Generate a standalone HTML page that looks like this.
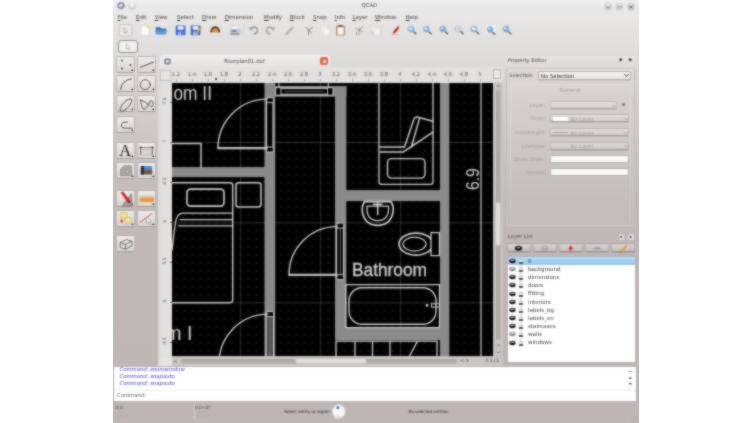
<!DOCTYPE html>
<html><head><meta charset="utf-8"><title>QCAD</title>
<style>
html,body{margin:0;padding:0;background:#fff}
body{width:752px;height:423px;overflow:hidden;position:relative;font-family:"DejaVu Sans","Liberation Sans",sans-serif;font-size:5.3px;line-height:6px;color:#2a2a2a}
#win{position:absolute;left:113px;top:0;width:526px;height:423px;overflow:hidden;
 background:linear-gradient(#ededed 0,#e5e4e3 24px,#dedcda 60px,#d3cfcc 100px,#cac5c2 150px,#c2bbb8 200px,#beb7b4 270px,#bdb6b3 423px)}
#win *{position:absolute;box-sizing:border-box}
#win svg *,#win .t *{position:static}
.t{white-space:nowrap}
.menu span{top:13.6px;font-size:5.4px;color:#3a3a3a}
.tb{width:18.8px;height:17.2px;border-radius:2.2px;border:0.6px solid #b9b4b1;border-bottom-color:#a39e9b;background:linear-gradient(#eeecea,#d9d5d2)}
.tb:after{content:"";position:absolute;right:1px;bottom:1px;border:1.3px solid transparent;border-right-color:#222;border-bottom-color:#222}
.tb.na:after{display:none}
.combo{height:8px;border-radius:2px;border:0.5px solid rgba(0,0,0,0.13);border-bottom-color:rgba(0,0,0,0.28);background:linear-gradient(rgba(255,255,255,0.32),rgba(255,255,255,0.05));box-shadow:0 0.8px 0 rgba(0,0,0,0.12)}
.inp{height:8px;border-radius:2px;border:0.5px solid #b5b0ad;background:#fafafa}
.lab{font-size:5.3px;color:#a5a09d;text-align:right;width:40px}
.lb{width:24.3px;height:9px;border-radius:2px;border:0.5px solid rgba(0,0,0,0.13);border-bottom-color:rgba(0,0,0,0.3);background:linear-gradient(rgba(255,255,255,0.4),rgba(255,255,255,0.08));box-shadow:0 0.8px 0 rgba(0,0,0,0.12)}
.row{left:0;width:128px;height:8.2px}
.row i{font-style:normal}
</style></head><body>
<svg width="0" height="0" style="position:absolute"><defs><filter id="softblur" x="0" y="0" width="100%" height="100%" color-interpolation-filters="sRGB"><feGaussianBlur stdDeviation="0.8" result="b"/><feComposite in="SourceGraphic" in2="b" operator="arithmetic" k1="0" k2="0.35" k3="0.65" k4="0"/></filter></defs></svg>
<div id="win"><div id="in" style="left:0;top:0;width:526px;height:423px;filter:url(#softblur)">

<div style="left:0;top:0;width:526px;height:12px;background:linear-gradient(#efefef,#e7e6e6)"></div>
<div class="t" style="left:244.4px;top:2.4px;width:24px;text-align:center;font-size:5.3px;color:#444">QCAD</div>
<svg style="left:1.5px;top:0px" width="22" height="11" viewBox="0 0 22 11"><circle cx="6" cy="5.5" r="3.6" fill="#7080c0"/><circle cx="6" cy="5.5" r="2" fill="#f4e8d8"/><circle cx="7.6" cy="6.8" r="1.3" fill="#c89030"/><circle cx="16.9" cy="6" r="3.9" fill="#d2d2d2"/><circle cx="16.9" cy="4.6" r="2.4" fill="#f4f4f4"/></svg>
<svg style="left:488px;top:1px" width="38" height="11" viewBox="0 0 38 11"><circle cx="7" cy="5.7" r="3.9" fill="#cdcdcd"/><circle cx="18.5" cy="5.7" r="3.9" fill="#cdcdcd"/><circle cx="30" cy="5.7" r="3.9" fill="#cbcbcb"/><circle cx="7" cy="4.6" r="2.3" fill="#e6e6e6"/><circle cx="18.5" cy="4.6" r="2.3" fill="#e6e6e6"/><circle cx="30" cy="4.6" r="2.3" fill="#e4e4e4"/><path d="M5.3 5.2 L7 6.9 L8.7 5.2" stroke="#6a6a6a" fill="none" stroke-width="1"/><path d="M16.8 6.6 L18.5 4.9 L20.2 6.6" stroke="#6a6a6a" fill="none" stroke-width="1"/><path d="M28.5 4.3 L31.5 7.3 M31.5 4.3 L28.5 7.3" stroke="#5a5a5a" fill="none" stroke-width="1"/></svg>
<div class="menu">
<span class="t" style="left:4.7px"><u>F</u>ile</span>
<span class="t" style="left:23.0px"><u>E</u>dit</span>
<span class="t" style="left:41.7px"><u>V</u>iew</span>
<span class="t" style="left:64.0px"><u>S</u>elect</span>
<span class="t" style="left:89.0px"><u>D</u>raw</span>
<span class="t" style="left:111.7px"><u>D</u>imension</span>
<span class="t" style="left:151.0px"><u>M</u>odify</span>
<span class="t" style="left:177.0px"><u>B</u>lock</span>
<span class="t" style="left:200.0px"><u>S</u>nap</span>
<span class="t" style="left:222.0px"><u>I</u>nfo</span>
<span class="t" style="left:239.5px"><u>L</u>ayer</span>
<span class="t" style="left:262.0px"><u>W</u>indow</span>
<span class="t" style="left:292.5px"><u>H</u>elp</span>
</div>
<svg id="tbar" style="left:0;top:22px" width="526" height="32" viewBox="113 22 526 32"><rect x="119.3" y="24.5" width="12.6" height="11.6" rx="1.8" fill="#eae9e8" stroke="#bab6b3" stroke-width="0.7"/><path d="M123.8 27.6 V33 L125.2 31.8 L126.2 33.8 L127 33.4 L126.1 31.5 L127.6 31.3 Z" fill="#f8f8f8" stroke="#888" stroke-width="0.5"/><path d="M141.2 25.6 H147 L149 27.6 V35.2 H141.2 Z" fill="#fbfbfb" stroke="#c8c8c8" stroke-width="0.5"/><circle cx="147.8" cy="26.8" r="1.7" fill="#f4e04a"/><path d="M155.8 27.2 H160 L161 28.4 H166 V34.2 H155.8 Z" fill="#2f6fb8"/><path d="M157.3 30 H167.4 L166 34.3 H155.8 Z" fill="#5a9ae0"/><rect x="175.8" y="25.6" width="9.6" height="9.6" rx="1" fill="#2f62d8"/><rect x="177.6" y="26.2" width="6" height="3.6" fill="#eef2fb"/><rect x="178" y="31.6" width="5.2" height="3.6" fill="#9db8ee"/><rect x="181" y="32.2" width="1.4" height="2.6" fill="#2f62d8"/><rect x="190.8" y="25.6" width="9.6" height="9.6" rx="1" fill="#2f62d8"/><rect x="192.6" y="26.2" width="6" height="3.6" fill="#eef2fb"/><rect x="193" y="31.6" width="5.2" height="3.6" fill="#9db8ee"/><path d="M195.5 33 L201 26 L202.3 27 L196.8 34 L195 34.6 Z" fill="#f0a030"/><path d="M210.3 33.8 Q210.3 26.2 215.2 26.2 Q220.2 26.2 220.2 33.8 Z" fill="#3a3230"/><path d="M212 32.5 Q212 28 215.2 28 Q218.5 28 218.5 32.5 Z" fill="#f08a20"/><rect x="210" y="32.3" width="10.6" height="2" rx="0.6" fill="#e8e0d8"/><rect x="232" y="25.8" width="6.4" height="4" fill="#f4f4f4" stroke="#bbb" stroke-width="0.4"/><rect x="229.8" y="29" width="10.8" height="4.6" rx="1" fill="#c4c8cc"/><rect x="231.6" y="30" width="5" height="2" fill="#5a8fd8"/><rect x="230.8" y="33.2" width="8.8" height="1.6" fill="#8a8e92"/><path d="M243.5 25.5 V35.5 M381.5 25.5 V35.5" stroke="#d2cfcd" stroke-width="0.7"/><path d="M251.2 29 A3.3 3.3 0 1 1 253.6 33.6" fill="none" stroke="#a09d9b" stroke-width="1.7"/><path d="M249 27 L253.4 28.2 L250.4 31.2 Z" fill="#a09d9b"/><path d="M272.8 29 A3.3 3.3 0 1 0 270.4 33.6" fill="none" stroke="#a9a6a4" stroke-width="1.7"/><path d="M275 27 L270.6 28.2 L273.6 31.2 Z" fill="#a9a6a4"/><path d="M286 33.5 L292 26.5 L293.5 27.8 L287.5 34.6 L285.6 35 Z" fill="#b9b5b2" stroke="#9a9693" stroke-width="0.4"/><path d="M305.5 27.2 L311.5 32.8 M312.5 27.4 L307.8 30.4 M308.8 30 L308.4 34.6" stroke="#8a8684" stroke-width="1" fill="none" stroke-linecap="round"/><rect x="320.8" y="25.8" width="6" height="7.4" rx="0.8" fill="#f3f2f1" stroke="#d2cfcd" stroke-width="0.5"/><rect x="323.4" y="27.8" width="6" height="7.4" rx="0.8" fill="#f7f6f5" stroke="#d2cfcd" stroke-width="0.5"/><rect x="336" y="25.6" width="9" height="10" rx="1.2" fill="#b98a5a"/><rect x="337.4" y="27.2" width="6.2" height="7.4" fill="#f6f5f3"/><rect x="338.8" y="25" width="3.4" height="2" rx="0.6" fill="#5c5c5c"/><path d="M356 28.4 L362.6 31.6 M362.8 26.8 L358 31 M359.4 28 L359 35 M356.6 32.2 V35" stroke="#a19d9a" stroke-width="1" fill="none" stroke-linecap="round"/><rect x="371.6" y="26" width="6" height="7.4" rx="0.8" fill="#efeeed" stroke="#d2cfcd" stroke-width="0.5"/><rect x="374.2" y="28" width="6" height="7.2" rx="0.8" fill="#f3f2f1" stroke="#d2cfcd" stroke-width="0.5"/><path d="M372.4 34.6 V31.6" stroke="#b0aca9" stroke-width="0.8"/><path d="M392.6 33.4 Q394.5 28.5 399.2 25.8 Q399.6 29.5 394.4 33.6 Z" fill="#d8261c"/><path d="M392 34.8 Q395 34 398.6 34.6" stroke="#e09a90" stroke-width="0.7" fill="none"/><rect x="485.2" y="24.6" width="10.2" height="9" rx="1" fill="#f6f6f6" stroke="#d8d6d4" stroke-width="0.5"/><path d="M413.3 31.3 L415.8 33.8" stroke="#555" stroke-width="1.3" stroke-linecap="round"/><circle cx="411" cy="29" r="3.1" fill="#66a3ea" stroke="#a8bcd6" stroke-width="0.8"/><circle cx="410.4" cy="28.2" r="1.6" fill="#cfe4fa" opacity="0.75"/><path d="M409.4 29 H412.6 M411 27.4 V30.6" stroke="#fff" stroke-width="0.9"/><path d="M428.6 31.3 L431.1 33.8" stroke="#555" stroke-width="1.3" stroke-linecap="round"/><circle cx="426.3" cy="29" r="3.1" fill="#66a3ea" stroke="#a8bcd6" stroke-width="0.8"/><circle cx="425.7" cy="28.2" r="1.6" fill="#cfe4fa" opacity="0.75"/><path d="M424.7 29 H427.9" stroke="#fff" stroke-width="1"/><path d="M445.1 31.3 L447.6 33.8" stroke="#555" stroke-width="1.3" stroke-linecap="round"/><circle cx="442.8" cy="29" r="3.1" fill="#6a9ee0" stroke="#a8bcd6" stroke-width="0.8"/><circle cx="442.2" cy="28.2" r="1.6" fill="#cfe4fa" opacity="0.75"/><path d="M460.5 31.3 L463.0 33.8" stroke="#555" stroke-width="1.3" stroke-linecap="round"/><circle cx="458.2" cy="29" r="3.1" fill="#d6d4d2" stroke="#a8bcd6" stroke-width="0.8"/><circle cx="457.59999999999997" cy="28.2" r="1.6" fill="#cfe4fa" opacity="0.75"/><path d="M476.1 31.3 L478.6 33.8" stroke="#555" stroke-width="1.3" stroke-linecap="round"/><circle cx="473.8" cy="29" r="3.1" fill="#66a3ea" stroke="#a8bcd6" stroke-width="0.8"/><circle cx="473.2" cy="28.2" r="1.6" fill="#cfe4fa" opacity="0.75"/><rect x="472" y="27.8" width="3.6" height="2.2" fill="#fff"/><path d="M492.3 31.7 L494.8 34.199999999999996" stroke="#555" stroke-width="1.3" stroke-linecap="round"/><circle cx="490" cy="29.4" r="3.1" fill="#66a3ea" stroke="#a8bcd6" stroke-width="0.8"/><circle cx="489.4" cy="28.599999999999998" r="1.6" fill="#cfe4fa" opacity="0.75"/><path d="M508.3 31.3 L510.8 33.8" stroke="#555" stroke-width="1.3" stroke-linecap="round"/><circle cx="506" cy="29" r="3.1" fill="#5a96e0" stroke="#a8bcd6" stroke-width="0.8"/><circle cx="505.4" cy="28.2" r="1.6" fill="#cfe4fa" opacity="0.75"/><path d="M503.6 29 H508.4" stroke="#dfeaf8" stroke-width="0.8"/></svg>
<div style="left:5.4px;top:40.2px;width:19.8px;height:12.4px;border-radius:3px;border:0.8px solid #8f8b88;background:#f1f0ef"></div>
<svg style="left:11px;top:43px" width="9" height="8" viewBox="0 0 9 8"><path d="M2.5 1 V6 L3.8 5 L4.8 7 L5.6 6.6 L4.7 4.8 L6.2 4.6 Z" fill="#fafafa" stroke="#8a8a8a" stroke-width="0.5"/></svg>
<div class="tb" style="left:3.2px;top:55.8px"></div>
<div class="tb" style="left:24.4px;top:55.8px"></div>
<div class="tb" style="left:3.2px;top:75.3px"></div>
<div class="tb" style="left:24.4px;top:75.3px"></div>
<div class="tb" style="left:3.2px;top:95.3px"></div>
<div class="tb" style="left:24.4px;top:95.3px"></div>
<div class="tb" style="left:3.2px;top:115.8px"></div>
<div class="tb" style="left:3.2px;top:141.8px"></div>
<div class="tb" style="left:24.4px;top:141.8px"></div>
<div class="tb" style="left:3.2px;top:161.8px"></div>
<div class="tb" style="left:24.4px;top:161.8px"></div>
<div class="tb" style="left:3.2px;top:189.8px"></div>
<div class="tb" style="left:24.4px;top:189.8px"></div>
<div class="tb" style="left:3.2px;top:209.8px"></div>
<div class="tb" style="left:24.4px;top:209.8px"></div>
<div class="tb na" style="left:3.2px;top:235.3px"></div>
<svg id="lticons" style="left:0;top:54px" width="47" height="202" viewBox="113 54 47 202"><g fill="none" stroke="#4a4846" stroke-width="0.9" stroke-linecap="round"><circle cx="122" cy="60.5" r="0.9" fill="#333" stroke="none"/><circle cx="130.5" cy="65" r="0.9" fill="#333" stroke="none"/><circle cx="122" cy="68.5" r="0.9" fill="#333" stroke="none"/><path d="M140.4 67.3 L153.7 62" stroke-width="1"/><path d="M120.5 89.7 Q121.5 80 131.8 78.8" stroke-width="1"/><circle cx="145.3" cy="84.7" r="5"/><ellipse cx="126" cy="105" rx="8" ry="3.1" transform="rotate(-47 126 105)"/><path d="M140.5 100 Q141.5 109 144.5 109.5 Q148 106 150.5 100.5 Q153.5 100.5 153.2 104.5 Q152.5 108 149.5 105.5 Q146 101.5 140.5 100 Z"/><path d="M127.5 122 Q121.3 122 121.3 125.2 Q121.3 128.2 125 128.2 H132"/></g><text x="119.2" y="155.8" font-family="Liberation Serif, serif" font-size="16.5" fill="#1a1a1a">A</text><path d="M140.5 155 V146.5 M152.5 155 V146.5 M140.5 147.5 H152.5" stroke="#6a6866" stroke-width="0.9" fill="none"/><rect x="141.8" y="149.5" width="9.4" height="5.5" fill="#d8d5d2" stroke="#9a9693" stroke-width="0.5"/><circle cx="140.5" cy="147.5" r="1" fill="#333"/><circle cx="152.5" cy="147.5" r="1" fill="#333"/><path d="M120.5 175.5 V169 L124 165.8 H131.5 V175.5 Z" fill="#aaa7a4" stroke="#77736f" stroke-width="0.6"/><circle cx="127" cy="171.5" r="2" fill="#c4c1be" stroke="#77736f" stroke-width="0.5"/><rect x="140" y="165.2" width="13" height="10" fill="#f4f4f4"/><rect x="140.8" y="166" width="11.4" height="8.4" fill="#4a8ad8"/><path d="M140.8 168.5 L146 170.8 L152.2 169.5 V174.4 H140.8 Z" fill="#7a5a30"/><path d="M140.8 166 H144 V174.4 H140.8 Z" fill="#2a2a30"/><path d="M122 206 H131.6 V193.5 Z" fill="#a5a2a0" stroke="#66625f" stroke-width="0.6"/><path d="M120.6 192.6 L123 191.6 L130.5 201 L129.8 203.2 L127.6 202.6 Z" fill="#d8241c"/><path d="M127.6 202.6 L129.8 203.2 L130.5 201 Z" fill="#333"/><rect x="139.6" y="197.4" width="14.4" height="4.6" rx="0.8" fill="#f09438"/><rect x="139.6" y="195.6" width="14.4" height="1.6" fill="#c8c4c0"/><rect x="120.2" y="212.4" width="7.2" height="6" rx="1" fill="#f2dc8a" stroke="#b8a868" stroke-width="0.5"/><circle cx="128.2" cy="220.6" r="3.4" fill="#f4e29a" stroke="#a89858" stroke-width="0.6"/><circle cx="121.6" cy="221" r="1.5" fill="#e04030"/><path d="M140 222.5 L152.5 213.2" stroke="#d83a30" stroke-width="0.9"/><path d="M146.6 216.4 V223.6 L148.4 222 L149.8 224.8 L151 224.2 L149.7 221.6 L151.8 221.3 Z" fill="#f1f1f1" stroke="#777" stroke-width="0.5"/><path d="M120.2 242.6 L126.6 239.6 L131.8 241.2 V246 L125.4 249.2 L120.2 247.4 Z M120.2 242.6 L125.4 244.4 L131.8 241.2 M125.4 244.4 V249.2" fill="none" stroke="#55524f" stroke-width="0.8" stroke-linejoin="round"/></svg>
<div style="left:47px;top:55px;width:170px;height:14px;border-radius:3px 3px 0 0;background:linear-gradient(#efeeee,#e3e1e0)"></div>
<div class="t" style="left:103.4px;top:58.3px;width:56px;text-align:center;font-size:5.3px;color:#444">floorplan01.dxf</div>
<svg style="left:50px;top:57px" width="9" height="9" viewBox="0 0 9 9"><circle cx="4.5" cy="4.5" r="3.3" fill="#6878b8"/><circle cx="4.5" cy="4.5" r="1.8" fill="#f4e8d8"/><circle cx="5.8" cy="5.6" r="1.2" fill="#c89030"/></svg>
<div style="left:207.2px;top:57.4px;width:8.3px;height:8.1px;border-radius:2.2px;background:#e4673c"></div><div style="left:209.8px;top:59.9px;width:3.1px;height:3.1px;border-radius:1.5px;background:#fff"></div>
<div style="left:44.5px;top:66.8px;width:345.5px;height:16.3px;background:#e3e1df"></div>
<div style="left:44.5px;top:68px;width:14.5px;height:298px;background:linear-gradient(90deg,#d9d6d3,#e2e0de 3px)"></div>
<div style="left:46.8px;top:69.8px;width:11.4px;height:10.8px;background:#e7e5e3;border:0.6px solid #c2bfbc"></div>
<div style="left:380.3px;top:69.4px;width:7.5px;height:10px;background:#e9e7e6;border:0.6px solid #b9b6b3"></div>
<div class="t" style="left:55.0px;top:71px;width:16px;text-align:center;font-size:5.3px;color:#555">1.2</div>
<div class="t" style="left:71.0px;top:71px;width:16px;text-align:center;font-size:5.3px;color:#555">1.4</div>
<div class="t" style="left:87.0px;top:71px;width:16px;text-align:center;font-size:5.3px;color:#555">1.6</div>
<div class="t" style="left:103.0px;top:71px;width:16px;text-align:center;font-size:5.3px;color:#555">1.8</div>
<div class="t" style="left:119.0px;top:71px;width:16px;text-align:center;font-size:5.3px;color:#555">2</div>
<div class="t" style="left:135.0px;top:71px;width:16px;text-align:center;font-size:5.3px;color:#555">2.2</div>
<div class="t" style="left:151.0px;top:71px;width:16px;text-align:center;font-size:5.3px;color:#555">2.4</div>
<div class="t" style="left:167.0px;top:71px;width:16px;text-align:center;font-size:5.3px;color:#555">2.6</div>
<div class="t" style="left:183.0px;top:71px;width:16px;text-align:center;font-size:5.3px;color:#555">2.8</div>
<div class="t" style="left:199.0px;top:71px;width:16px;text-align:center;font-size:5.3px;color:#555">3</div>
<div class="t" style="left:215.0px;top:71px;width:16px;text-align:center;font-size:5.3px;color:#555">3.2</div>
<div class="t" style="left:231.0px;top:71px;width:16px;text-align:center;font-size:5.3px;color:#555">3.4</div>
<div class="t" style="left:247.0px;top:71px;width:16px;text-align:center;font-size:5.3px;color:#555">3.6</div>
<div class="t" style="left:263.0px;top:71px;width:16px;text-align:center;font-size:5.3px;color:#555">3.8</div>
<div class="t" style="left:279.0px;top:71px;width:16px;text-align:center;font-size:5.3px;color:#555">4</div>
<div class="t" style="left:295.0px;top:71px;width:16px;text-align:center;font-size:5.3px;color:#555">4.2</div>
<div class="t" style="left:311.0px;top:71px;width:16px;text-align:center;font-size:5.3px;color:#555">4.4</div>
<div class="t" style="left:327.0px;top:71px;width:16px;text-align:center;font-size:5.3px;color:#555">4.6</div>
<div class="t" style="left:343.0px;top:71px;width:16px;text-align:center;font-size:5.3px;color:#555">4.8</div>
<div class="t" style="left:359.0px;top:71px;width:16px;text-align:center;font-size:5.3px;color:#555">5</div>
<div style="left:62.7px;top:78.6px;width:0.7px;height:2.2px;background:#999"></div>
<div style="left:78.7px;top:78.6px;width:0.7px;height:2.2px;background:#999"></div>
<div style="left:94.7px;top:78.6px;width:0.7px;height:2.2px;background:#999"></div>
<div style="left:110.7px;top:78.6px;width:0.7px;height:2.2px;background:#999"></div>
<div style="left:126.7px;top:78.6px;width:0.7px;height:2.2px;background:#999"></div>
<div style="left:142.7px;top:78.6px;width:0.7px;height:2.2px;background:#999"></div>
<div style="left:158.7px;top:78.6px;width:0.7px;height:2.2px;background:#999"></div>
<div style="left:174.7px;top:78.6px;width:0.7px;height:2.2px;background:#999"></div>
<div style="left:190.7px;top:78.6px;width:0.7px;height:2.2px;background:#999"></div>
<div style="left:206.7px;top:78.6px;width:0.7px;height:2.2px;background:#999"></div>
<div style="left:222.7px;top:78.6px;width:0.7px;height:2.2px;background:#999"></div>
<div style="left:238.7px;top:78.6px;width:0.7px;height:2.2px;background:#999"></div>
<div style="left:254.7px;top:78.6px;width:0.7px;height:2.2px;background:#999"></div>
<div style="left:270.7px;top:78.6px;width:0.7px;height:2.2px;background:#999"></div>
<div style="left:286.7px;top:78.6px;width:0.7px;height:2.2px;background:#999"></div>
<div style="left:302.7px;top:78.6px;width:0.7px;height:2.2px;background:#999"></div>
<div style="left:318.7px;top:78.6px;width:0.7px;height:2.2px;background:#999"></div>
<div style="left:334.7px;top:78.6px;width:0.7px;height:2.2px;background:#999"></div>
<div style="left:350.7px;top:78.6px;width:0.7px;height:2.2px;background:#999"></div>
<div style="left:366.7px;top:78.6px;width:0.7px;height:2.2px;background:#999"></div>
<div style="left:102.4px;top:78px;width:1.6px;height:2px;background:#444"></div>
<div class="t" style="left:47.0px;top:98px;width:10px;height:6px;text-align:center;font-size:4.5px;color:#555;transform:rotate(-90deg)">7.5</div>
<div style="left:56.5px;top:102px;width:2px;height:0.7px;background:#666"></div>
<div class="t" style="left:47.0px;top:138px;width:10px;height:6px;text-align:center;font-size:4.5px;color:#555;transform:rotate(-90deg)">7</div>
<div style="left:56.5px;top:142px;width:2px;height:0.7px;background:#666"></div>
<div class="t" style="left:47.0px;top:178px;width:10px;height:6px;text-align:center;font-size:4.5px;color:#555;transform:rotate(-90deg)">6.5</div>
<div style="left:56.5px;top:182px;width:2px;height:0.7px;background:#666"></div>
<div class="t" style="left:47.0px;top:218px;width:10px;height:6px;text-align:center;font-size:4.5px;color:#555;transform:rotate(-90deg)">6</div>
<div style="left:56.5px;top:222px;width:2px;height:0.7px;background:#666"></div>
<div class="t" style="left:47.0px;top:258px;width:10px;height:6px;text-align:center;font-size:4.5px;color:#555;transform:rotate(-90deg)">5.5</div>
<div style="left:56.5px;top:262px;width:2px;height:0.7px;background:#666"></div>
<div class="t" style="left:47.0px;top:298px;width:10px;height:6px;text-align:center;font-size:4.5px;color:#555;transform:rotate(-90deg)">5</div>
<div style="left:56.5px;top:302px;width:2px;height:0.7px;background:#666"></div>
<div class="t" style="left:47.0px;top:338px;width:10px;height:6px;text-align:center;font-size:4.5px;color:#555;transform:rotate(-90deg)">4.5</div>
<div style="left:56.5px;top:342px;width:2px;height:0.7px;background:#666"></div>
<div style="left:380.5px;top:82px;width:9.5px;height:284px;background:#c9c4c1"></div>
<div style="left:383.2px;top:90px;width:4.4px;height:250px;border-radius:2px;background:linear-gradient(90deg,#aaa4a1,#bbb5b2)"></div>
<div style="left:382.4px;top:201.7px;width:6px;height:44.3px;border-radius:2.5px;background:#e0dddb;border:0.5px solid #c4c0bd"></div>
<div style="left:59px;top:356.5px;width:328px;height:9px;background:#cbc6c3"></div>
<div style="left:68px;top:359.2px;width:276px;height:4.4px;border-radius:2px;background:linear-gradient(#aaa4a1,#bbb5b2)"></div>
<div style="left:182px;top:358.3px;width:72px;height:6px;border-radius:2.5px;background:#e0dddb;border:0.5px solid #c4c0bd"></div>
<div style="left:48px;top:357.5px;width:10px;height:7.5px;background:#e6e4e2"></div>
<div class="t" style="left:60px;top:358px;font-size:5.3px;color:#444">&lt;</div>
<div class="t" style="left:347px;top:358.2px;font-size:4.8px;color:#444">&lt; &gt;</div>
<div class="t" style="left:372.6px;top:358.3px;font-size:4.8px;color:#4a4a4a;letter-spacing:1px">01/1</div>
<svg style="left:381.8px;top:82px" width="7" height="274" viewBox="0 0 7 274"><path d="M2 4.8 L3.5 3.3 L5 4.8 M2 263.8 L3.5 262.3 L5 263.8 M2 269.5 L3.5 271 L5 269.5" stroke="#555" stroke-width="0.8" fill="none"/></svg>
<svg id="cv" style="left:59px;top:82.9px;background:#000" width="321.3" height="273.3" viewBox="172 82.9 321.3 273.3">
<defs><pattern id="g" x="240.5" y="142.5" width="8" height="8" patternUnits="userSpaceOnUse"><rect x="-0.5" y="-0.5" width="1" height="1" fill="#5c5c5c"/><rect x="7.5" y="-0.5" width="1" height="1" fill="#5c5c5c"/><rect x="-0.5" y="7.5" width="1" height="1" fill="#5c5c5c"/><rect x="7.5" y="7.5" width="1" height="1" fill="#5c5c5c"/></pattern></defs>
<rect x="172" y="82" width="321" height="274" fill="#000"/>
<rect x="172" y="82" width="321" height="274" fill="url(#g)"/>
<g stroke="#383838" stroke-width="0.8">
<path d="M240.5 82 V356 M320.7 82 V356 M400.7 82 V356 M172 142.5 H493 M172 222.7 H493 M172 302.7 H493"/>
</g>
<g fill="#8a8a8a">
<rect x="264.5" y="82" width="10.7" height="274"/>
<rect x="172" y="167" width="93" height="10"/>
<rect x="275" y="86" width="71.5" height="10.5"/>
<rect x="335" y="86" width="11.3" height="252"/>
<rect x="335" y="190" width="114" height="11"/>
<rect x="440" y="82" width="9.3" height="274"/>
<rect x="335" y="327.5" width="114" height="12.5"/>
</g>
<g fill="none" stroke="#d0d0d0" stroke-width="1.45" stroke-linecap="round" stroke-linejoin="round">
<!-- dimension / long lines -->
<path d="M481 82 V356" stroke-width="1.2"/>
<path d="M279 82 V87 M328.3 82 V87" stroke-width="1"/>
<!-- window -->
<rect x="276" y="86.6" width="57" height="9.4" fill="#b0b0b0" stroke="none"/>
<rect x="281" y="89" width="47" height="4.6" fill="#000" stroke="none"/>
<path d="M285 91.3 H323" stroke="#888" stroke-width="0.6"/>
<rect x="276" y="87.5" width="5" height="7.6" fill="#000" stroke-width="0.9"/>
<rect x="328" y="87.5" width="5" height="7.6" fill="#000" stroke-width="0.9"/>
<!-- door 1 -->
<rect x="267" y="99" width="6" height="50" fill="#000" stroke-width="1"/>
<rect x="266.6" y="97.5" width="6.8" height="5" rx="1" fill="#000" stroke-width="1"/>
<rect x="266.6" y="147" width="6.8" height="5" rx="1" fill="#000" stroke-width="1"/>
<path d="M218 148 A49 49 0 0 1 267 99" stroke-width="1.4"/>
<path d="M218 148 H266.5" stroke-width="2.2" stroke="#c4c4c4"/>
<!-- door 2 -->
<rect x="337" y="226" width="6.5" height="50" fill="#000" stroke-width="1"/>
<path d="M340.3 229 V273" stroke="#999" stroke-width="0.7"/>
<rect x="336.8" y="223" width="7" height="5" rx="1" fill="#000" stroke-width="1"/>
<rect x="336.8" y="274.5" width="7" height="5" rx="1" fill="#000" stroke-width="1"/>
<path d="M289 274.5 A48 48 0 0 1 337 226.5" stroke-width="1.4"/>
<path d="M289 274.7 H336.5" stroke-width="2.2" stroke="#c4c4c4"/>
<!-- door 3 -->
<rect x="266.5" y="314" width="7" height="44" fill="#4a4a4a" stroke-width="1"/>
<path d="M270 318 V356" stroke="#999" stroke-width="0.7"/>
<rect x="266.3" y="311.5" width="7.4" height="5" rx="1" fill="#000" stroke-width="1"/>
<path d="M219 363 A49 49 0 0 1 268 314" stroke-width="1.4"/>
<!-- small room outline bottom-left of bedroom II -->
<path d="M172 143.5 H201 V167"/>
<!-- bed -->
<path d="M172 182.7 H230 Q232.7 182.7 232.7 185.5 V300 Q232.7 302.6 230 302.6 H172" stroke-width="1.4"/>
<rect x="187" y="189" width="37" height="17" rx="3.5" stroke-width="1.6"/>
<rect x="236" y="182.7" width="25" height="24.3" rx="2.5" stroke-width="1.5"/>
<path d="M232.5 213 H182.5 Q177 213.5 175.5 222 Q173.5 236 172 250" stroke-width="1.3"/>
<path d="M180 219.5 H232.5 M178.5 225.7 H232.5" stroke-width="1.3"/>
<!-- recliner / furniture -->
<path d="M379 82 V182 Q379 184.3 381.5 184.3 H430.5 Q433 184.3 433 182 V82" stroke-width="1.3"/>
<rect x="387.5" y="158.5" width="37.5" height="19.5" rx="4" stroke-width="1.4"/>
<path d="M380 147 H404.5 L414 119 Q415 116 418 117.2 L433 121.2 M380 152 H403 L433 132 M411.3 147.2 L419.3 119" stroke-width="1.5"/>
<!-- sink -->
<path d="M364.5 201.6 H391 Q394 206 393 212 Q390.5 225.2 377.7 225.2 Q365 225.2 362.4 212 Q361.5 206 364.5 201.6 Z" stroke-width="1.7"/>
<path d="M367 206 H388.5 Q389.5 220.5 377.7 220.5 Q366 220.5 367 206 Z" stroke-width="1.3"/>
<path d="M377.7 203 V214.5 M373.5 204.2 H382" stroke-width="1.5"/>
<!-- toilet -->
<ellipse cx="416" cy="244" rx="17" ry="11" stroke-width="1.7"/>
<ellipse cx="414.5" cy="244" rx="11.5" ry="7" stroke-width="1.2"/>
<rect x="431" y="232.5" width="8.5" height="23" fill="#000" stroke-width="1.3"/>
<!-- bathtub -->
<rect x="345.8" y="284.5" width="93.7" height="43" stroke-width="1.2"/>
<rect x="349" y="287.7" width="87" height="36.5" rx="13" stroke-width="1.4"/>
<circle cx="427" cy="305.3" r="1.3" fill="#e0e0e0" stroke="none"/>
<path d="M431.5 303.7 H438.5 M431.5 307 H438.5 M431.5 303.7 V307" stroke-width="1"/>
<!-- stairs -->
<path d="M336 356 V341 H437 V356 M355 341 V356 M372.5 341 V356 M390 341 V356 M417.5 341 L409.5 356" stroke-width="1.3"/>
</g>
<g fill="#d4d4d4" font-family="Liberation Sans, sans-serif">
<text x="173.5" y="99.8" font-size="19.5" textLength="38.5" lengthAdjust="spacingAndGlyphs">om II</text>
<text x="352" y="276" font-size="18.8" textLength="75" lengthAdjust="spacingAndGlyphs" stroke="#d4d4d4" stroke-width="0.35">Bathroom</text>
<text x="154.5" y="340" font-size="19.5" textLength="38" lengthAdjust="spacingAndGlyphs">om I</text>
<text transform="translate(478.6 190) rotate(-90)" font-size="18" textLength="22" lengthAdjust="spacingAndGlyphs">6.9</text>
</g>
</svg>
<div style="left:393px;top:56px;width:129px;height:10px;background:linear-gradient(#e6e4e3,#dddad8);border-radius:2px"></div>
<div class="t" style="left:394.7px;top:56.8px;font-size:5.2px;color:#444">Property Editor</div>
<div class="t" style="left:506px;top:57px;font-size:4.5px;color:#333">&#9670;</div><div class="t" style="left:515.5px;top:57px;font-size:4.5px;color:#333">&#9670;</div>
<div style="left:393px;top:67.5px;width:129px;height:159px;border-radius:2.5px;border:0.7px solid #bfbab7;border-top-color:#cfcbc8;box-shadow:inset 0 0 0 0.5px rgba(255,255,255,0.35)"></div>
<div class="t" style="left:396.3px;top:72px;font-size:4.9px;color:#444">Selection:</div>
<div style="left:425px;top:71px;width:93px;height:9px;border-radius:2px;border:0.5px solid #b8b3b0;background:linear-gradient(#f5f4f3,#e6e4e2);box-shadow:0 0.8px 0 #c0bbb8"></div>
<div class="t" style="left:428px;top:72.5px;font-size:5.3px;color:#222">No Selection</div>
<svg style="left:510px;top:73px" width="7" height="5" viewBox="0 0 7 5"><path d="M1.5 1.2 L3.5 3.4 L5.5 1.2" stroke="#333" stroke-width="1" fill="none"/></svg>
<div style="left:397px;top:83.5px;width:121px;height:140px;border-radius:2px;border:0.5px solid rgba(255,255,255,0.2);border-bottom-color:rgba(255,255,255,0.05);background:rgba(255,255,255,0.04)"></div>
<div class="t" style="left:437px;top:87px;width:40px;text-align:center;font-size:5.3px;color:#a09b98">General</div>
<div class="t lab" style="left:393px;top:102.0px">Layer:</div>
<div class="t lab" style="left:393px;top:115.3px">Color:</div>
<div class="t lab" style="left:393px;top:129.2px">Lineweight:</div>
<div class="t lab" style="left:393px;top:142.7px">Linetype:</div>
<div class="t lab" style="left:393px;top:156.2px">Draw Order:</div>
<div class="t lab" style="left:393px;top:168.7px">Handle:</div>
<div class="combo" style="left:436.5px;top:101.3px;width:67px"></div>
<div class="combo" style="left:436.5px;top:114.3px;width:79px"></div>
<div class="combo" style="left:436.5px;top:128.3px;width:79px"></div>
<div class="combo" style="left:436.5px;top:141.7px;width:79px"></div>
<div class="inp" style="left:437px;top:155.2px;width:78.5px"></div>
<div class="inp" style="left:437px;top:167.7px;width:78.5px"></div>
<div style="left:440.3px;top:116.5px;width:15px;height:4px;background:#fff"></div>
<div style="left:440.3px;top:132px;width:15px;height:0.8px;background:#aaa"></div>
<div class="t" style="left:457.5px;top:115.5px;font-size:5.3px;color:#a39e9b">By Layer</div>
<div class="t" style="left:457.5px;top:129.5px;font-size:5.3px;color:#a39e9b">By Layer</div>
<div class="t" style="left:457.5px;top:143px;font-size:5.3px;color:#a39e9b">By Layer</div>
<svg style="left:497.5px;top:103.8px" width="6" height="4" viewBox="0 0 6 4"><path d="M1 0.8 L3 3 L5 0.8" stroke="#a09b98" stroke-width="0.8" fill="none"/></svg>
<svg style="left:509.5px;top:116.8px" width="6" height="4" viewBox="0 0 6 4"><path d="M1 0.8 L3 3 L5 0.8" stroke="#a09b98" stroke-width="0.8" fill="none"/></svg>
<svg style="left:509.5px;top:130.8px" width="6" height="4" viewBox="0 0 6 4"><path d="M1 0.8 L3 3 L5 0.8" stroke="#a09b98" stroke-width="0.8" fill="none"/></svg>
<svg style="left:509.5px;top:144.2px" width="6" height="4" viewBox="0 0 6 4"><path d="M1 0.8 L3 3 L5 0.8" stroke="#a09b98" stroke-width="0.8" fill="none"/></svg>
<div style="left:509.3px;top:103.3px;width:3.2px;height:3.2px;border-radius:1.6px;background:#777"></div>
<div class="t" style="left:394.7px;top:233.4px;font-size:5.2px;color:#555">Layer List</div>
<div style="left:505.5px;top:234px;width:5.5px;height:5.5px;border-radius:3px;background:#e8e6e5"></div><div style="left:515px;top:234px;width:5.5px;height:5.5px;border-radius:3px;background:#e8e6e5"></div>
<div class="t" style="left:506.8px;top:233.6px;font-size:3.5px;color:#333">&#9670;</div><div class="t" style="left:516.3px;top:233.6px;font-size:3.5px;color:#333">&#9670;</div>
<div class="lb" style="left:393.5px;top:243.3px"></div>
<div class="lb" style="left:419.6px;top:243.3px"></div>
<div class="lb" style="left:445.7px;top:243.3px"></div>
<div class="lb" style="left:471.8px;top:243.3px"></div>
<div class="lb" style="left:497.9px;top:243.3px"></div>
<svg style="left:393px;top:243px" width="132" height="11" viewBox="506 243 132 11"><ellipse cx="518.5" cy="248.3" rx="3.6" ry="2.5" fill="#111"/><ellipse cx="518.5" cy="247.6" rx="2" ry="0.9" fill="#999"/><ellipse cx="544.6" cy="248.3" rx="3.6" ry="2.5" fill="#aaa6a3"/><ellipse cx="544.6" cy="247.6" rx="2" ry="0.9" fill="#ccc"/><path d="M570.8 245.3 L573 248.3 L570.8 251.3 L568.6 248.3 Z" fill="#e03030"/><rect x="593.5" y="247.5" width="7" height="1.8" rx="0.6" fill="#9a9693"/><path d="M620 251.5 L626 245 L627.3 246.2 L621.3 252.4 Z" fill="#e8962c"/><path d="M620 251.5 L619.6 252.8 L621.3 252.4Z" fill="#444"/></svg>
<div style="left:394px;top:256.3px;width:128.5px;height:107px;background:#fff;border:0.5px solid #b5b0ad"></div>
<div style="left:394.5px;top:257.2px;width:127.5px;height:7.6px;background:linear-gradient(#b4dcfa,#8fc6f2);border-radius:1px"></div>
<svg style="left:395px;top:256.80px" width="20" height="8" viewBox="0 0 20 8"><ellipse cx="4.5" cy="4" rx="3.1" ry="2.2" fill="#111"/><ellipse cx="4.5" cy="3.2" rx="1.9" ry="0.8" fill="#bbb"/><rect x="11" y="2.6" width="4" height="4.2" rx="0.6" fill="#e9e9e9" stroke="#bdbdbd" stroke-width="0.4"/><rect x="11" y="5" width="4" height="1.9" rx="0.4" fill="#4a4a4a"/><path d="M12 2.8 V1.9 a1 1 0 0 1 2 0 V2.8" stroke="#c4c4c4" stroke-width="0.7" fill="none"/></svg>
<div class="t" style="left:415px;top:257.60px;font-size:5.5px;color:#383838">0</div>
<svg style="left:395px;top:264.98px" width="20" height="8" viewBox="0 0 20 8"><ellipse cx="4.5" cy="4" rx="3.1" ry="2.2" fill="#888"/><ellipse cx="4.5" cy="3.2" rx="1.9" ry="0.8" fill="#eee"/><rect x="11" y="2.6" width="4" height="4.2" rx="0.6" fill="#e9e9e9" stroke="#bdbdbd" stroke-width="0.4"/><rect x="11" y="5" width="4" height="1.9" rx="0.4" fill="#4a4a4a"/><path d="M12 2.8 V1.9 a1 1 0 0 1 2 0 V2.8" stroke="#c4c4c4" stroke-width="0.7" fill="none"/></svg>
<div class="t" style="left:415px;top:265.78px;font-size:5.5px;color:#383838">background</div>
<svg style="left:395px;top:273.16px" width="20" height="8" viewBox="0 0 20 8"><ellipse cx="4.5" cy="4" rx="3.1" ry="2.2" fill="#111"/><ellipse cx="4.5" cy="3.2" rx="1.9" ry="0.8" fill="#bbb"/><rect x="11" y="2.6" width="4" height="4.2" rx="0.6" fill="#e9e9e9" stroke="#bdbdbd" stroke-width="0.4"/><rect x="11" y="5" width="4" height="1.9" rx="0.4" fill="#4a4a4a"/><path d="M12 2.8 V1.9 a1 1 0 0 1 2 0 V2.8" stroke="#c4c4c4" stroke-width="0.7" fill="none"/></svg>
<div class="t" style="left:415px;top:273.96px;font-size:5.5px;color:#383838">dimensions</div>
<svg style="left:395px;top:281.34px" width="20" height="8" viewBox="0 0 20 8"><ellipse cx="4.5" cy="4" rx="3.1" ry="2.2" fill="#111"/><ellipse cx="4.5" cy="3.2" rx="1.9" ry="0.8" fill="#bbb"/><rect x="11" y="2.6" width="4" height="4.2" rx="0.6" fill="#e9e9e9" stroke="#bdbdbd" stroke-width="0.4"/><rect x="11" y="5" width="4" height="1.9" rx="0.4" fill="#4a4a4a"/><path d="M12 2.8 V1.9 a1 1 0 0 1 2 0 V2.8" stroke="#c4c4c4" stroke-width="0.7" fill="none"/></svg>
<div class="t" style="left:415px;top:282.14px;font-size:5.5px;color:#383838">doors</div>
<svg style="left:395px;top:289.52px" width="20" height="8" viewBox="0 0 20 8"><ellipse cx="4.5" cy="4" rx="3.1" ry="2.2" fill="#111"/><ellipse cx="4.5" cy="3.2" rx="1.9" ry="0.8" fill="#bbb"/><rect x="11" y="2.6" width="4" height="4.2" rx="0.6" fill="#e9e9e9" stroke="#bdbdbd" stroke-width="0.4"/><rect x="11" y="5" width="4" height="1.9" rx="0.4" fill="#4a4a4a"/><path d="M12 2.8 V1.9 a1 1 0 0 1 2 0 V2.8" stroke="#c4c4c4" stroke-width="0.7" fill="none"/></svg>
<div class="t" style="left:415px;top:290.32px;font-size:5.5px;color:#383838">fitting</div>
<svg style="left:395px;top:297.70px" width="20" height="8" viewBox="0 0 20 8"><ellipse cx="4.5" cy="4" rx="3.1" ry="2.2" fill="#111"/><ellipse cx="4.5" cy="3.2" rx="1.9" ry="0.8" fill="#bbb"/><rect x="11" y="2.6" width="4" height="4.2" rx="0.6" fill="#e9e9e9" stroke="#bdbdbd" stroke-width="0.4"/><rect x="11" y="5" width="4" height="1.9" rx="0.4" fill="#4a4a4a"/><path d="M12 2.8 V1.9 a1 1 0 0 1 2 0 V2.8" stroke="#c4c4c4" stroke-width="0.7" fill="none"/></svg>
<div class="t" style="left:415px;top:298.50px;font-size:5.5px;color:#383838">interiors</div>
<svg style="left:395px;top:305.88px" width="20" height="8" viewBox="0 0 20 8"><ellipse cx="4.5" cy="4" rx="3.1" ry="2.2" fill="#111"/><ellipse cx="4.5" cy="3.2" rx="1.9" ry="0.8" fill="#bbb"/><rect x="11" y="2.6" width="4" height="4.2" rx="0.6" fill="#e9e9e9" stroke="#bdbdbd" stroke-width="0.4"/><rect x="11" y="5" width="4" height="1.9" rx="0.4" fill="#4a4a4a"/><path d="M12 2.8 V1.9 a1 1 0 0 1 2 0 V2.8" stroke="#c4c4c4" stroke-width="0.7" fill="none"/></svg>
<div class="t" style="left:415px;top:306.68px;font-size:5.5px;color:#383838">labels_bg</div>
<svg style="left:395px;top:314.06px" width="20" height="8" viewBox="0 0 20 8"><ellipse cx="4.5" cy="4" rx="3.1" ry="2.2" fill="#111"/><ellipse cx="4.5" cy="3.2" rx="1.9" ry="0.8" fill="#bbb"/><rect x="11" y="2.6" width="4" height="4.2" rx="0.6" fill="#e9e9e9" stroke="#bdbdbd" stroke-width="0.4"/><rect x="11" y="5" width="4" height="1.9" rx="0.4" fill="#4a4a4a"/><path d="M12 2.8 V1.9 a1 1 0 0 1 2 0 V2.8" stroke="#c4c4c4" stroke-width="0.7" fill="none"/></svg>
<div class="t" style="left:415px;top:314.86px;font-size:5.5px;color:#383838">labels_en</div>
<svg style="left:395px;top:322.24px" width="20" height="8" viewBox="0 0 20 8"><ellipse cx="4.5" cy="4" rx="3.1" ry="2.2" fill="#111"/><ellipse cx="4.5" cy="3.2" rx="1.9" ry="0.8" fill="#bbb"/><rect x="11" y="2.6" width="4" height="4.2" rx="0.6" fill="#e9e9e9" stroke="#bdbdbd" stroke-width="0.4"/><rect x="11" y="5" width="4" height="1.9" rx="0.4" fill="#4a4a4a"/><path d="M12 2.8 V1.9 a1 1 0 0 1 2 0 V2.8" stroke="#c4c4c4" stroke-width="0.7" fill="none"/></svg>
<div class="t" style="left:415px;top:323.04px;font-size:5.5px;color:#383838">staircases</div>
<svg style="left:395px;top:330.42px" width="20" height="8" viewBox="0 0 20 8"><ellipse cx="4.5" cy="4" rx="3.1" ry="2.2" fill="#888"/><ellipse cx="4.5" cy="3.2" rx="1.9" ry="0.8" fill="#eee"/><rect x="11" y="2.6" width="4" height="4.2" rx="0.6" fill="#e9e9e9" stroke="#bdbdbd" stroke-width="0.4"/><rect x="11" y="5" width="4" height="1.9" rx="0.4" fill="#4a4a4a"/><path d="M12 2.8 V1.9 a1 1 0 0 1 2 0 V2.8" stroke="#c4c4c4" stroke-width="0.7" fill="none"/></svg>
<div class="t" style="left:415px;top:331.22px;font-size:5.5px;color:#383838">walls</div>
<svg style="left:395px;top:338.60px" width="20" height="8" viewBox="0 0 20 8"><ellipse cx="4.5" cy="4" rx="3.1" ry="2.2" fill="#111"/><ellipse cx="4.5" cy="3.2" rx="1.9" ry="0.8" fill="#bbb"/><rect x="11" y="2.6" width="4" height="4.2" rx="0.6" fill="#e9e9e9" stroke="#bdbdbd" stroke-width="0.4"/><rect x="11" y="5" width="4" height="1.9" rx="0.4" fill="#4a4a4a"/><path d="M12 2.8 V1.9 a1 1 0 0 1 2 0 V2.8" stroke="#c4c4c4" stroke-width="0.7" fill="none"/></svg>
<div class="t" style="left:415px;top:339.40px;font-size:5.5px;color:#383838">windows</div>
<div style="left:1px;top:366.6px;width:521.7px;height:34.5px;background:#fff"></div>
<div style="left:1px;top:389.5px;width:521.7px;height:0.6px;background:#ececec"></div>
<div class="t" style="left:6.5px;top:366.2px;font-size:5.3px;font-style:italic;color:#3236d6">Command: zoomwindow</div>
<div class="t" style="left:6.5px;top:373.3px;font-size:5.3px;font-style:italic;color:#3236d6">Command: snapauto</div>
<div class="t" style="left:6.5px;top:380.4px;font-size:5.3px;font-style:italic;color:#3236d6">Command: snapauto</div>
<div class="t" style="left:4px;top:391.7px;font-size:5.3px;color:#555">Command:</div>
<svg style="left:513px;top:368px" width="9" height="20" viewBox="0 0 9 20"><path d="M2 3.5 H6.5" stroke="#777" stroke-width="0.8"/><path d="M2.3 10.8 L4.3 8.8 L6.3 10.8 Z M2.3 15 L4.3 17 L6.3 15 Z" fill="#555"/></svg>
<div class="t" style="left:2.6px;top:404.5px;font-size:4.5px;color:#444">0,0</div>
<div class="t" style="left:2.6px;top:412.5px;font-size:4.5px;color:#b0aaa7">@0,0</div>
<div class="t" style="left:81.8px;top:404.5px;font-size:4.5px;color:#444">0.0&lt;0°</div>
<div class="t" style="left:81.8px;top:412.5px;font-size:4.5px;color:#b0aaa7">@0&lt;0</div>
<div style="left:80.5px;top:404px;width:0.6px;height:15px;background:#d8d4d1"></div>
<div class="t" style="left:171.3px;top:408.8px;font-size:4.1px;color:#1e1e1e">Select entity or region</div>
<div class="t" style="left:295.4px;top:408.5px;font-size:4px;color:#1e1e1e">No selected entities.</div>
<svg style="left:218px;top:403px" width="16" height="17" viewBox="0 0 16 17"><ellipse cx="7.8" cy="8.6" rx="6.3" ry="7" fill="#f7f7f7" stroke="#d4d4d4" stroke-width="0.5"/><ellipse cx="7.6" cy="14" rx="4" ry="1.4" fill="#e2e2e2"/><rect x="5.6" y="3.2" width="2.6" height="2.8" rx="0.8" fill="#3f62cc"/></svg>
<svg style="left:517px;top:414px" width="8" height="8" viewBox="0 0 8 8"><path d="M7 1 L1 7 M7 4 L4 7" stroke="#a9a4a1" stroke-width="0.7"/></svg>
</div></div>
</body></html>
